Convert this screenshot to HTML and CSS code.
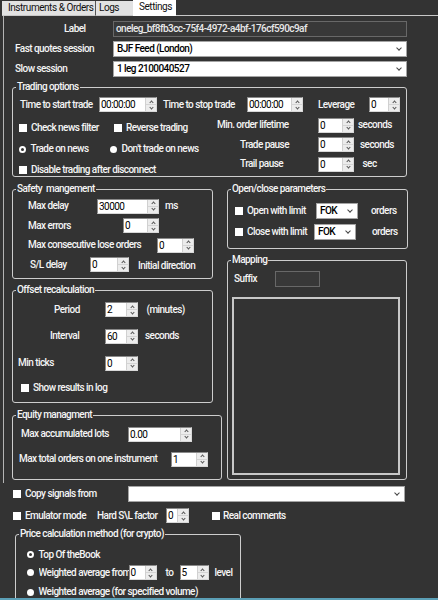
FILE: index.html
```html
<!DOCTYPE html>
<html>
<head>
<meta charset="utf-8">
<link rel="stylesheet" href="styles.css">
</head>
<body>
<div class="tabs">
  <div class="tab t1">Instruments &amp; Orders</div>
  <div class="tab t2">Logs</div>
  <div class="tab t3">Settings</div>
  <div class="tabfill"></div>
</div>

<div class="panel">
  <div class="frow"><div class="flabel lab">Label</div><div class="tinput">oneleg_bf8fb3cc-75f4-4972-a4bf-176cf590c9af</div></div>
  <div class="frow"><div class="flabel">Fast quotes session</div><div class="select w294"><span>BJF Feed (London)</span><i class="chev"></i></div></div>
  <div class="frow"><div class="flabel">Slow session</div><div class="select w294"><span>1 leg 2100040527</span><i class="chev"></i></div></div>

  <fieldset class="grp g-trade">
    <legend>Trading options</legend>
    <div class="row h15 pl7 mt4">
      <div class="cell w79">Time to start trade</div>
      <div class="spin w58"><span class="v">00:00:00</span><span class="b"><i class="u"></i><i class="d"></i></span></div>
      <div class="cell w90 pl6">Time to stop trade</div>
      <div class="spin w56"><span class="v">00:00:00</span><span class="b"><i class="u"></i><i class="d"></i></span></div>
      <div class="cell w66 pl15">Leverage</div>
      <div class="spin w31"><span class="v">0</span><span class="b"><i class="u"></i><i class="d"></i></span></div>
    </div>
    <div class="tcols">
      <div class="tleft">
        <div class="row h14 pl6"><div class="cell w95"><i class="cb"></i>Check news filter</div><div class="cell"><i class="cb"></i>Reverse trading</div></div>
        <div class="row h14 pl6"><div class="cell w91"><i class="rb on"></i>Trade on news</div><div class="cell"><i class="rb"></i>Don't trade on news</div></div>
        <div class="row h14 pl6"><div class="cell"><i class="cb"></i>Disable trading after disconnect</div></div>
      </div>
      <div class="tright">
        <div class="row h15"><div class="cell w101">Min. order lifetime</div><div class="spin w36"><span class="v">0</span><span class="b"><i class="u"></i><i class="d"></i></span></div><div class="cell ml4">seconds</div></div>
        <div class="row h15"><div class="cell w101 pl23">Trade pause</div><div class="spin w36"><span class="v">0</span><span class="b"><i class="u"></i><i class="d"></i></span></div><div class="cell ml6">seconds</div></div>
        <div class="row h15"><div class="cell w101 pl23">Trail pause</div><div class="spin w36"><span class="v">0</span><span class="b"><i class="u"></i><i class="d"></i></span></div><div class="cell ml8">sec</div></div>
      </div>
    </div>
  </fieldset>

  <div class="cols">
    <div class="lcol">
      <fieldset class="grp g-safety">
        <legend>Safety&nbsp; mangement</legend>
        <div class="stack s-safety">
          <div class="row h15 pl15"><div class="cell w69">Max delay</div><div class="spin w62"><span class="v">30000</span><span class="b"><i class="u"></i><i class="d"></i></span></div><div class="cell ml6">ms</div></div>
          <div class="row h15 pl15"><div class="cell w95">Max errors</div><div class="spin w36"><span class="v">0</span><span class="b"><i class="u"></i><i class="d"></i></span></div></div>
          <div class="row h15 pl15"><div class="cell w129">Max consecutive lose orders</div><div class="spin w37"><span class="v">0</span><span class="b"><i class="u"></i><i class="d"></i></span></div></div>
          <div class="row h15 pl17"><div class="cell w60">S/L delay</div><div class="spin w39"><span class="v">0</span><span class="b"><i class="u"></i><i class="d"></i></span></div><div class="cell ml9 low">Initial direction</div></div>
        </div>
      </fieldset>

      <fieldset class="grp g-offset">
        <legend>Offset recalculation</legend>
        <div class="row h15 pl41 mt6"><div class="cell w51">Period</div><div class="spin w33"><span class="v">2</span><span class="b"><i class="u"></i><i class="d"></i></span></div><div class="cell ml8">(minutes)</div></div>
        <div class="row h15 pl37 mt11"><div class="cell w55">Interval</div><div class="spin w33"><span class="v">60</span><span class="b"><i class="u"></i><i class="d"></i></span></div><div class="cell ml7">seconds</div></div>
        <div class="row h15 pl5 mt12"><div class="cell w87">Min ticks</div><div class="spin w33"><span class="v">0</span><span class="b"><i class="u"></i><i class="d"></i></span></div></div>
        <div class="row h15 pl8 mt9"><div class="cell"><i class="cb"></i>Show results in log</div></div>
      </fieldset>

      <fieldset class="grp g-equity">
        <legend>Equity managment</legend>
        <div class="row h15 pl8 mt5"><div class="cell w107">Max accumulated lots</div><div class="spin w64"><span class="v">0.00</span><span class="b"><i class="u"></i><i class="d"></i></span></div></div>
        <div class="row h15 pl6 mt10"><div class="cell w152">Max total orders on one instrument</div><div class="spin w37"><span class="v">1</span><span class="b"><i class="u"></i><i class="d"></i></span></div></div>
      </fieldset>
    </div>

    <div class="rcol">
      <fieldset class="grp g-oc">
        <legend>Open/close parameters</legend>
        <div class="row h16 pl7 mt8"><div class="cell w81"><i class="cb"></i>Open with limit</div><div class="select w42"><span>FOK</span><i class="chev"></i></div><div class="cell ml13">orders</div></div>
        <div class="row h16 pl7 mt5"><div class="cell w79"><i class="cb"></i>Close with limit</div><div class="select w42"><span>FOK</span><i class="chev"></i></div><div class="cell ml16">orders</div></div>
      </fieldset>

      <fieldset class="grp g-map">
        <legend>Mapping</legend>
        <div class="row h16 pl6 mt5"><div class="cell w41">Suffix</div><div class="tinput w45"></div></div>
        <div class="listbox"></div>
      </fieldset>
    </div>
  </div>
</div>

<div class="below">
  <div class="row h16 pl9 mt3"><div class="cell w115"><i class="cb"></i>Copy signals from</div><div class="select w277"><span></span><i class="chev"></i></div></div>
  <div class="row h15 pl9 mt6"><div class="cell w84"><i class="cb"></i>Emulator mode</div><div class="cell w69">Hard S\L factor</div><div class="spin w23"><span class="v">0</span><span class="b"><i class="u"></i><i class="d"></i></span></div><div class="cell ml23"><i class="cb cb3"></i>Real comments</div></div>

  <fieldset class="grp g-price">
    <legend>Price calculation method (for crypto)</legend>
    <div class="row h14 pl11 mt7"><div class="cell"><i class="rb on"></i>Top Of theBook</div></div>
    <div class="row h15 pl11 mt3"><div class="cell"><i class="rb"></i><span class="clip">Weighted average from</span></div><div class="spin w28"><span class="v">0</span><span class="b"><i class="u"></i><i class="d"></i></span></div><div class="cell w14 ml9">to</div><div class="spin w29"><span class="v">5</span><span class="b"><i class="u"></i><i class="d"></i></span></div><div class="cell ml6">level</div></div>
    <div class="row h14 pl11 mt5"><div class="cell"><i class="rb"></i>Weighted average (for specified volume)</div></div>
  </fieldset>
</div>

<div class="statusline"></div>
</body>
</html>
```

FILE: styles.css
```css
html, body {
  margin: 0;
  padding: 0;
}
body {
  width: 438px;
  height: 600px;
  overflow: hidden;
  background: #333333;
  color: #f5f5f5;
  font-family: Roboto, "Liberation Sans", Arial, sans-serif;
  font-size: 10px;
  font-weight: 500;
  letter-spacing: -0.55px;
  line-height: 12px;
}

/* tabs */
.tabs {
  display: flex;
  height: 16px;
}
.tab {
  box-sizing: border-box;
  height: 15px;
  margin-top: 1px;
  background: #e2e2e2;
  color: #111;
  font-weight: 400;
  letter-spacing: -0.45px;
  line-height: 14px;
  white-space: nowrap;
  border-bottom: 1px solid #c8c8c8;
}
.t1 { margin-left: 2px; width: 94px; padding-left: 6px; border-right: 1px solid #555; }
.t2 { margin-left: 0; width: 37px; padding-left: 3px; }
.t3 {
  width: 43px;
  height: 16px;
  margin-top: 0;
  padding-left: 6px;
  background: #ffffff;
  border-bottom: none;
  line-height: 13px;
}
.tabfill {
  flex: 1;
  border-bottom: 1px solid #c8c8c8;
  height: 15px;
}

/* main panel */
.panel {
  box-sizing: border-box;
  height: 467px;
  margin-left: 3px;
  border-left: 1px solid #b4b4b4;
  padding-top: 5px;
}
.frow {
  display: flex;
  align-items: center;
  height: 16px;
}
.frow + .frow { margin-top: 4px; }
.flabel {
  box-sizing: border-box;
  width: 109px;
  padding-left: 11px;
  white-space: nowrap;
}
.flabel.lab { padding-left: 60px; }

.tinput {
  box-sizing: border-box;
  width: 294px;
  height: 16px;
  border: 1px solid #686868;
  background: #383838;
  color: #e8e8e8;
  padding-left: 2px;
  line-height: 14px;
  white-space: nowrap;
  overflow: hidden;
}
.select {
  box-sizing: border-box;
  height: 16px;
  border: 1px solid #a4a4a4;
  background: #ffffff;
  color: #000;
  padding-left: 3px;
  line-height: 14px;
  display: flex;
  align-items: center;
  justify-content: space-between;
  white-space: nowrap;
  flex: none;
}
.chev {
  width: 3px;
  height: 3px;
  border-right: 1px solid #444;
  border-bottom: 1px solid #444;
  transform: rotate(45deg);
  margin-right: 5px;
  margin-top: -2px;
}

/* group boxes */
.grp {
  margin: 0;
  padding: 0;
  border: 1px solid #cdcdcd;
  border-radius: 3px;
  box-sizing: border-box;
  min-width: 0;
}
.grp > legend {
  margin-left: 3px;
  padding: 0 1px;
  height: 12px;
  line-height: 12px;
  white-space: nowrap;
}
.g-trade { margin-left: 8px; margin-top: 4px; width: 395px; height: 96px; }
.cols { display: flex; align-items: flex-start; margin-left: 8px; margin-top: 6px; }
.lcol { width: 210px; }
.rcol { margin-left: 5px; width: 181px; }
.g-safety { width: 201px; height: 96px; }
.g-offset { width: 201px; height: 119px; margin-top: 5px; }
.g-equity { width: 210px; height: 71px; margin-top: 6px; }
.g-oc { width: 181px; height: 66px; }
.g-map { width: 180px; height: 226px; margin-top: 5px; }
.g-price { margin-left: 11px; margin-top: 5px; width: 226px; height: 90px; }

.listbox {
  box-sizing: border-box;
  margin-left: 4px;
  margin-top: 10px;
  width: 168px;
  height: 178px;
  border: 2px solid #c8c8c8;
  background: #333;
}

/* rows */
.row {
  display: flex;
  align-items: center;
  white-space: nowrap;
}
.h14 { height: 14px; }
.h15 { height: 15px; }
.h16 { height: 16px; }
.cell {
  box-sizing: border-box;
  display: flex;
  align-items: center;
  white-space: nowrap;
  flex: none;
}
.low { padding-top: 3px; }
.clip { display: block; width: 90px; overflow: hidden; }

.tcols { display: flex; margin-top: 5.5px; }
.tleft { width: 204px; padding-top: 3.5px; }
.tleft .row + .row { margin-top: 7px; }
.tright { flex: 1; }
.tright .row + .row { margin-top: 4.5px; }
.s-safety { padding-top: 3.5px; }
.s-safety .row + .row { margin-top: 4.5px; }

.below { padding-left: 4px; }

/* spin box */
.spin {
  box-sizing: border-box;
  display: flex;
  height: 15px;
  flex: none;
  border: 1px solid #8a8a8a;
  border-right-color: #d8d8d8;
  border-bottom-color: #d8d8d8;
  background: #ffffff;
  color: #000;
  font-weight: 400;
}
.spin .v {
  flex: 1;
  padding-left: 1px;
  line-height: 13px;
  overflow: hidden;
  white-space: nowrap;
}
.spin .b {
  width: 10px;
  display: flex;
  flex-direction: column;
  background: #ececec;
  border-left: 1px solid #d0d0d0;
}
.spin .b i {
  flex: 1;
  display: flex;
  align-items: center;
  justify-content: center;
}
.spin .b i.u { border-bottom: 1px solid #d4d4d4; }
.spin .b i::before {
  content: "";
  width: 2px;
  height: 2px;
  border-left: 1px solid #555;
  border-top: 1px solid #555;
  transform: rotate(45deg);
}
.spin .b i.u::before { margin-top: 2px; }
.spin .b i.d::before { transform: rotate(225deg); margin-top: -2px; }

/* check / radio */
.cb {
  width: 8px;
  height: 8px;
  background: #ffffff;
  flex: none;
  margin-right: 4px;
}
.cb3 { margin-right: 3px; }
.rb {
  box-sizing: border-box;
  width: 7px;
  height: 7px;
  border-radius: 50%;
  background: #ffffff;
  flex: none;
  margin-right: 4.5px;
}
.rb.on {
  background: #333;
  border: 2px solid #ffffff;
}

/* widths */
.w14 { width: 14px; }
.w23 { width: 23px; }
.w28 { width: 28px; }
.w29 { width: 29px; }
.w31 { width: 31px; }
.w33 { width: 33px; }
.w36 { width: 36px; }
.w37 { width: 37px; }
.w39 { width: 39px; }
.w41 { width: 41px; }
.w42 { width: 42px; }
.w45 { width: 45px; }
.w51 { width: 51px; }
.w55 { width: 55px; }
.w56 { width: 56px; }
.w58 { width: 58px; }
.w60 { width: 60px; }
.w62 { width: 62px; }
.w64 { width: 64px; }
.w66 { width: 66px; }
.w69 { width: 69px; }
.w79 { width: 79px; }
.w81 { width: 81px; }
.w84 { width: 84px; }
.w87 { width: 87px; }
.w90 { width: 90px; }
.w91 { width: 91px; }
.w95 { width: 95px; }
.w101 { width: 101px; }
.w107 { width: 107px; }
.w115 { width: 115px; }
.w129 { width: 129px; }
.w152 { width: 152px; }
.w277 { width: 277px; }
.w294 { width: 294px; }

/* paddings */
.pl5 { padding-left: 5px; }
.pl6 { padding-left: 6px; }
.pl7 { padding-left: 7px; }
.pl8 { padding-left: 8px; }
.pl9 { padding-left: 9px; }
.pl11 { padding-left: 11px; }
.pl15 { padding-left: 15px; }
.pl17 { padding-left: 17px; }
.pl23 { padding-left: 23px; }
.pl37 { padding-left: 37px; }
.pl41 { padding-left: 41px; }

/* margins */
.ml4 { margin-left: 4px; }
.ml6 { margin-left: 6px; }
.ml7 { margin-left: 7px; }
.ml8 { margin-left: 8.5px; }
.ml9 { margin-left: 9px; }
.ml13 { margin-left: 13px; }
.ml16 { margin-left: 16px; }
.ml23 { margin-left: 23px; }
.mt3 { margin-top: 3.5px; }
.mt4 { margin-top: 4px; }
.mt5 { margin-top: 5px; }
.mt6 { margin-top: 6px; }
.mt7 { margin-top: 7.5px; }
.mt8 { margin-top: 8px; }
.mt9 { margin-top: 9.5px; }
.mt10 { margin-top: 10px; }
.mt11 { margin-top: 11.5px; }
.mt12 { margin-top: 12px; }
.g-equity .mt5 { margin-top: 5.5px; }
.below > .row.mt3 { margin-top: 3px; }

.statusline {
  position: fixed;
  left: 0;
  right: 0;
  bottom: 0;
  height: 2px;
  background: #5b9fb6;
}
```
